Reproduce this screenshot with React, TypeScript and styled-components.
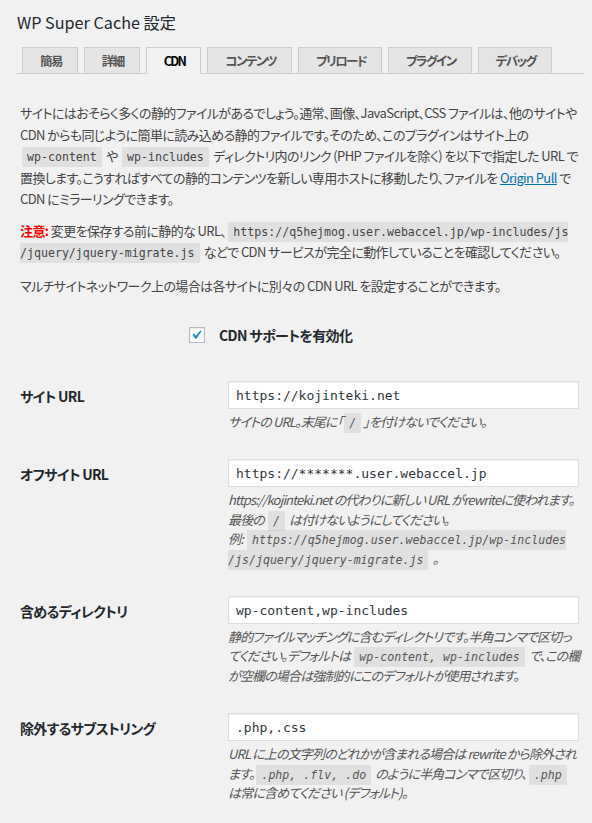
import styled, { createGlobalStyle } from 'styled-components';

const GlobalStyle = createGlobalStyle`
  html, body {
    margin: 0;
    padding: 0;
    background: #f1f1f1;
  }
  body {
    font-family: 'Noto Sans CJK JP', sans-serif;
    font-feature-settings: 'palt';
    color: #444;
    font-size: 13px;
  }
`;

const Wrap = styled.div`
  padding: 9px 8px 40px 16px;
`;

const Title = styled.h1`
  margin: 0 0 0 1px;
  font-size: 16.2px;
  line-height: 26px;
  font-weight: 400;
  color: #23282d;
`;

const TabBar = styled.div`
  display: flex;
  gap: 6px;
  margin-top: 12px;
  padding-left: 6px;
  border-bottom: 1px solid #ccc;
`;

const Tab = styled.div<{ $active?: boolean }>`
  padding: 4px 15px 4px 17px;
  line-height: 17px;
  font-size: 12.5px;
  font-weight: 700;
  letter-spacing: -1.6px;
  border: 1px solid #ccc;
  margin-bottom: -1px;
  background: ${p => (p.$active ? '#f1f1f1' : '#e5e5e5')};
  color: ${p => (p.$active ? '#000' : '#555')};
  border-bottom-color: ${p => (p.$active ? '#f1f1f1' : '#ccc')};
`;

const Content = styled.div`
  padding-left: 4px;
`;

const Para = styled.p<{ $top?: number }>`
  margin: ${p => p.$top ?? 10}px 0 0;
  line-height: 21.5px;
  letter-spacing: -0.6px;
`;

const Code = styled.code<{ $italic?: boolean; $wrap?: boolean }>`
  font-family: 'DejaVu Sans Mono', monospace;
  font-size: 11.6px;
  line-height: 1;
  letter-spacing: 0;
  white-space: ${p => (p.$wrap ? 'normal' : 'nowrap')};
  font-style: ${p => (p.$italic ? 'italic' : 'normal')};
  background: rgba(0, 0, 0, 0.07);
  padding: 3px 5px 3px;
  margin: 0 2px;
`;

const NoWrap = styled.span`
  white-space: nowrap;
`;

const Warn = styled.strong`
  color: #f00;
`;

const Link = styled.a`
  color: #0073aa;
  text-decoration: underline;
`;

const CheckRow = styled.label`
  display: flex;
  align-items: center;
  gap: 14px;
  margin-top: 28px;
  padding-left: 169px;
  font-size: 14px;
  font-weight: 700;
  letter-spacing: -0.6px;
  color: #23282d;
  line-height: 22px;
`;

const CheckBox = styled.span`
  width: 14px;
  height: 14px;
  border: 1px solid #b4b9be;
  background: #fff;
  box-shadow: inset 0 1px 2px rgba(0, 0, 0, 0.1);
  display: flex;
  align-items: center;
  justify-content: center;
`;

const Form = styled.div`
  margin-top: 20px;
`;

const Row = styled.div`
  display: grid;
  grid-template-columns: 208px 1fr;
  padding: 15px 0 13px;
`;

const Label = styled.div`
  padding-top: 4px;
  font-size: 14px;
  font-weight: 700;
  letter-spacing: -0.7px;
  color: #23282d;
  line-height: 22px;
`;

const Field = styled.input`
  display: block;
  box-sizing: border-box;
  width: 351px;
  height: 28px;
  padding: 0 7px;
  border: 1px solid #ddd;
  box-shadow: inset 0 1px 2px rgba(0, 0, 0, 0.07);
  background: #fff;
  font-family: 'DejaVu Sans Mono', monospace;
  font-size: 13px;
  color: #32373c;
  outline: none;
`;

const Desc = styled.p`
  margin: 3px 0 0;
  font-style: italic;
  font-size: 13px;
  line-height: 19.4px;
  letter-spacing: -0.85px;
  color: #555;
  width: 353px;
`;

const App = () => {
  const tabs = ['簡易', '詳細', 'CDN', 'コンテンツ', 'プリロード', 'プラグイン', 'デバッグ'];
  return (
    <>
      <GlobalStyle />
      <Wrap>
        <Title>WP Super Cache 設定</Title>
        <TabBar>
          {tabs.map(t => (
            <Tab key={t} $active={t === 'CDN'}>
              {t}
            </Tab>
          ))}
        </TabBar>
        <Content>
          <Para $top={28}>
            サイトにはおそらく多くの静的ファイルがあるでしょう。通常、画像、JavaScript、CSS ファイルは、他のサイトや CDN
            からも同じように簡単に読み込める静的ファイルです。そのため、このプラグインはサイト上の <Code>wp-content</Code> や{' '}
            <Code>wp-includes</Code> ディレクトリ内のリンク (PHP ファイルを除く) を以下で指定した URL
            で置換します。こうすればすべての静的コンテンツを新しい専用ホストに移動したり、ファイルを <Link href='#'>Origin Pull</Link> で CDN
            にミラーリングできます。
          </Para>
          <Para>
            <Warn>注意:</Warn> 変更を保存する前に静的な URL、
            <Code $wrap>
              <NoWrap>https://q5hejmog.user.webaccel.jp/wp-includes/js</NoWrap>
              <wbr />
              <NoWrap>/jquery/jquery-migrate.js</NoWrap>
            </Code>{' '}
            などで CDN サービスが完全に動作していることを確認してください。
          </Para>
          <Para $top={12}>マルチサイトネットワーク上の場合は各サイトに別々の CDN URL を設定することができます。</Para>

          <CheckRow>
            <CheckBox>
              <svg width='16' height='16' viewBox='3 2 16 16'>
                <path d='M14.83 4.89l1.34.94-5.81 8.38H9.02L5.78 9.67l1.34-1.25 2.57 2.4z' fill='#1e8cbe' />
              </svg>
            </CheckBox>
            CDN サポートを有効化
          </CheckRow>

          <Form>
            <Row>
              <Label>サイト URL</Label>
              <div>
                <Field defaultValue='https://kojinteki.net' />
                <Desc>
                  サイトの URL。末尾に「<Code $italic>/</Code>」を付けないでください。
                </Desc>
              </div>
            </Row>
            <Row>
              <Label>オフサイト URL</Label>
              <div>
                <Field defaultValue='https://*******.user.webaccel.jp' />
                <Desc>
                  https://kojinteki.net の代わりに新しい URL がrewriteに使われます。最後の <Code $italic>/</Code>{' '}
                  は付けないようにしてください。
                  <br />
                  例:{' '}
                  <Code $italic $wrap>
                    <NoWrap>https://q5hejmog.user.webaccel.jp/wp-includes</NoWrap>
                    <wbr />
                    <NoWrap>/js/jquery/jquery-migrate.js</NoWrap>
                  </Code>{' '}
                  。
                </Desc>
              </div>
            </Row>
            <Row>
              <Label>含めるディレクトリ</Label>
              <div>
                <Field defaultValue='wp-content,wp-includes' />
                <Desc>
                  静的ファイルマッチングに含むディレクトリです。半角コンマで区切ってください。デフォルトは{' '}
                  <Code $italic>wp-content, wp-includes</Code> で、この欄が空欄の場合は強制的にこのデフォルトが使用されます。
                </Desc>
              </div>
            </Row>
            <Row>
              <Label>除外するサブストリング</Label>
              <div>
                <Field defaultValue='.php,.css' />
                <Desc>
                  URL に上の文字列のどれかが含まれる場合は rewrite から除外されます。<Code $italic>.php, .flv, .do</Code>{' '}
                  のように半角コンマで区切り、<Code $italic>.php</Code> は常に含めてください (デフォルト)。
                </Desc>
              </div>
            </Row>
          </Form>
        </Content>
      </Wrap>
    </>
  );
};

export default App;
